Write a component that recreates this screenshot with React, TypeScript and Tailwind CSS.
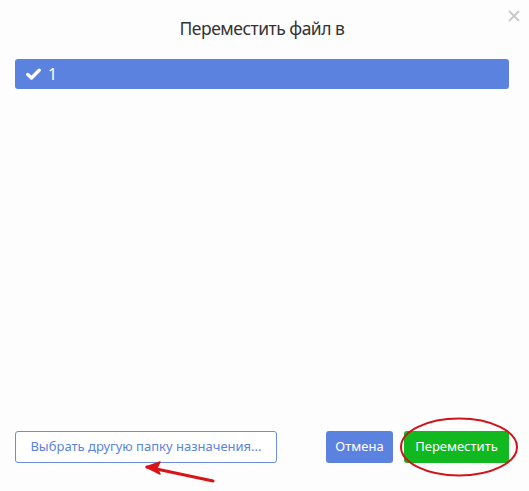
import React from "react";

export default function App() {
  return (
    <div
      className="relative w-[529px] h-[491px] bg-[#fdfdfd] overflow-hidden flex flex-col"
      style={{ fontFamily: '"Noto Sans", "Open Sans", sans-serif' }}
    >
      <div className="h-[59px] pt-[15px] pl-[15px] pr-[20px] flex justify-center shrink-0">
        <div className="text-[17.5px] tracking-[-0.5px] leading-[26px] text-[#333333]">Переместить файл в</div>
      </div>
      <button className="absolute right-[8px] top-[9px] w-[14px] h-[14px] flex items-center justify-center">
        <svg width="12" height="12" viewBox="0 0 12 12">
          <path d="M1 1 L11 11 M11 1 L1 11" stroke="#c8c8c8" strokeWidth="1.8" />
        </svg>
      </button>
      <div className="pl-[15px] pr-[20px]">
        <div className="h-[30px] rounded-[3px] bg-[#5c82e0] flex items-center pl-[11px] gap-[7px] text-white">
          <svg width="15" height="12" viewBox="0 0 15 12">
            <path d="M1.8 6.5 L5.5 10 L13.2 2.2" stroke="white" strokeWidth="3.4" fill="none" strokeLinecap="round" strokeLinejoin="round" />
          </svg>
          <span className="text-[16px] leading-none">1</span>
        </div>
      </div>
      <div className="flex-1" />
      <div className="flex items-center pl-[15px] pr-[20px] pb-[28px] shrink-0">
        <button className="shrink-0 h-[32px] w-[262px] border border-[#6b8de0] rounded-[3px] text-[#5c82e0] text-[13px] bg-white whitespace-nowrap">
          Выбрать другую папку назначения...
        </button>
        <div className="flex-1" />
        <button className="shrink-0 h-[32px] w-[67px] rounded-[3px] bg-[#5c82e0] text-white text-[13px]">
          Отмена
        </button>
        <button className="shrink-0 ml-[11px] h-[32px] w-[105px] rounded-[3px] bg-[#12b81f] text-white text-[13px]">
          Переместить
        </button>
      </div>
      <svg className="absolute inset-0 pointer-events-none" width="529" height="491" viewBox="0 0 529 491">
        <ellipse cx="459" cy="447" rx="58" ry="28.5" fill="none" stroke="#d0141a" strokeWidth="2" />
        <path d="M213 481 L147 467" stroke="#d91418" strokeWidth="3" strokeLinecap="round" />
        <path d="M146 467 L160 462 L157 468 L160 474 Z" fill="#d91418" stroke="#d91418" strokeWidth="1.5" strokeLinejoin="round" />
      </svg>
    </div>
  );
}
